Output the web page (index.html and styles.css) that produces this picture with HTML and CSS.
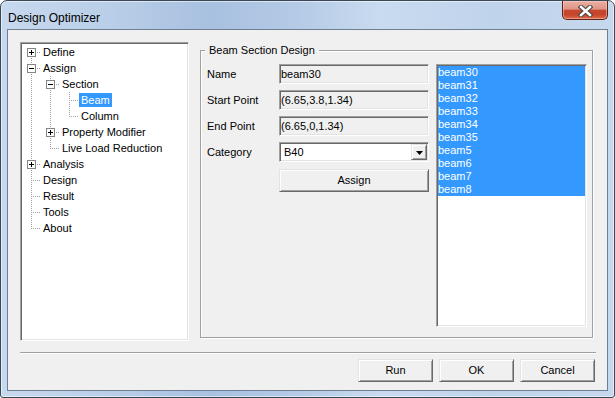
FILE: index.html
```html
<!DOCTYPE html>
<html>
<head>
<meta charset="utf-8">
<title>Design Optimizer</title>
<link rel="stylesheet" href="styles.css">
</head>
<body>
<div class="window">
  <div class="titlebar">
    <span class="title">Design Optimizer</span>
    <div class="close">
      <svg width="15" height="12" viewBox="0 0 15 12">
        <path d="M3 2 L12 10 M12 2 L3 10" stroke="#4a4a4a" stroke-width="4.6" stroke-linecap="square"/>
        <path d="M3 2 L12 10 M12 2 L3 10" stroke="#ffffff" stroke-width="2.4" stroke-linecap="square"/>
      </svg>
    </div>
  </div>
  <div class="client">
    <div class="main">
      <div class="tree">
        <div class="row"><span class="c first"><svg class="exp" width="9" height="9" viewBox="0 0 9 9"><rect x="0.5" y="0.5" width="8" height="8" fill="#fff" stroke="#848484"/><path d="M2 4.5h5M4.5 2v5" stroke="#000"/></svg></span><span class="lbl">Define</span></div>
        <div class="row"><span class="c"><svg class="exp" width="9" height="9" viewBox="0 0 9 9"><rect x="0.5" y="0.5" width="8" height="8" fill="#fff" stroke="#848484"/><path d="M2 4.5h5" stroke="#000"/></svg></span><span class="lbl">Assign</span></div>
        <div class="row"><span class="c pipe"></span><span class="c"><svg class="exp" width="9" height="9" viewBox="0 0 9 9"><rect x="0.5" y="0.5" width="8" height="8" fill="#fff" stroke="#848484"/><path d="M2 4.5h5" stroke="#000"/></svg></span><span class="lbl">Section</span></div>
        <div class="row"><span class="c pipe"></span><span class="c pipe"></span><span class="c"></span><span class="lbl sel">Beam</span></div>
        <div class="row"><span class="c pipe"></span><span class="c pipe"></span><span class="c last"></span><span class="lbl">Column</span></div>
        <div class="row"><span class="c pipe"></span><span class="c"><svg class="exp" width="9" height="9" viewBox="0 0 9 9"><rect x="0.5" y="0.5" width="8" height="8" fill="#fff" stroke="#848484"/><path d="M2 4.5h5M4.5 2v5" stroke="#000"/></svg></span><span class="lbl">Property Modifier</span></div>
        <div class="row"><span class="c pipe"></span><span class="c last"></span><span class="lbl">Live Load Reduction</span></div>
        <div class="row"><span class="c"><svg class="exp" width="9" height="9" viewBox="0 0 9 9"><rect x="0.5" y="0.5" width="8" height="8" fill="#fff" stroke="#848484"/><path d="M2 4.5h5M4.5 2v5" stroke="#000"/></svg></span><span class="lbl">Analysis</span></div>
        <div class="row"><span class="c"></span><span class="lbl">Design</span></div>
        <div class="row"><span class="c"></span><span class="lbl">Result</span></div>
        <div class="row"><span class="c"></span><span class="lbl">Tools</span></div>
        <div class="row"><span class="c last"></span><span class="lbl">About</span></div>
      </div>
      <div class="group">
        <div class="legend">Beam Section Design</div>
        <div class="group-body">
          <div class="form">
            <span class="label">Name</span><div class="field">beam30</div>
            <span class="label">Start Point</span><div class="field">(6.65,3.8,1.34)</div>
            <span class="label">End Point</span><div class="field">(6.65,0,1.34)</div>
            <span class="label">Category</span>
            <div class="combo"><span class="combo-text">B40</span><span class="drop"><svg width="7" height="4" viewBox="0 0 7 4"><path d="M0 0h7L3.5 4z" fill="#000"/></svg></span></div>
            <button class="btn assign">Assign</button>
          </div>
          <div class="list">
            <div class="item sel">beam30</div>
            <div class="item sel">beam31</div>
            <div class="item sel">beam32</div>
            <div class="item sel">beam33</div>
            <div class="item sel">beam34</div>
            <div class="item sel">beam35</div>
            <div class="item sel">beam5</div>
            <div class="item sel">beam6</div>
            <div class="item sel">beam7</div>
            <div class="item sel">beam8</div>
          </div>
        </div>
      </div>
    </div>
    <div class="sep"></div>
    <div class="buttons">
      <button class="btn">Run</button>
      <button class="btn">OK</button>
      <button class="btn">Cancel</button>
    </div>
  </div>
</div>
</body>
</html>
```

FILE: styles.css
```css
html, body {
  margin: 0;
  padding: 0;
  background: #ffffff;
}
body {
  font-family: "Liberation Sans", Arial, sans-serif;
  font-size: 11px;
  color: #000;
}
.window {
  width: 615px;
  height: 398px;
  box-sizing: border-box;
  border: 1px solid #3a4756;
  border-radius: 7px 7px 3px 3px;
  background: linear-gradient(to right, #c7d9ee 0%, #b9cee8 18%, #a8c1e0 34%, #b4cae6 48%, #c9dbef 62%, #bfd3eb 80%, #c5d8ed 100%);
  box-shadow: inset 0 0 0 1px rgba(255, 255, 255, 0.55);
  display: flex;
  flex-direction: column;
}
.titlebar {
  height: 28px;
  flex: none;
  display: flex;
  justify-content: space-between;
  align-items: flex-start;
}
.title {
  margin: 10px 0 0 7px;
  font-size: 12px;
  line-height: 14px;
  color: #000;
}
.close {
  width: 46px;
  height: 19px;
  margin-right: 6px;
  box-sizing: border-box;
  border: 1px solid #5e2218;
  border-top: none;
  border-radius: 0 0 5px 5px;
  background: linear-gradient(to bottom, #eab0a3 0%, #de9585 45%, #c8472f 52%, #c7442c 75%, #d96a47 100%);
  box-shadow: inset 0 0 0 1px rgba(255, 220, 210, 0.45);
  display: flex;
  align-items: center;
  justify-content: center;
}
.close svg {
  display: block;
  margin-top: 1px;
}
.client {
  flex: 1;
  margin: 0 6px 6px;
  border: 1px solid #6e7f93;
  background: #f0f0f0;
  padding: 12px 12px 0;
  display: flex;
  flex-direction: column;
}
.main {
  display: flex;
  gap: 11px;
  flex: none;
}

/* tree view */
.tree {
  width: 169px;
  height: 299px;
  box-sizing: border-box;
  background: #fff;
  border: 1px solid;
  border-color: #a0a0a0 #ffffff #ffffff #a0a0a0;
  box-shadow: inset 1px 1px 0 #696969, inset -1px -1px 0 #e3e3e3;
  padding: 1px;
}
.row {
  display: flex;
  align-items: center;
  height: 16px;
}
.c {
  position: relative;
  flex: none;
  width: 19px;
  height: 16px;
}
.c::before {
  content: "";
  position: absolute;
  left: 9px;
  width: 1px;
  top: 0;
  bottom: 0;
  background: repeating-linear-gradient(to bottom, #a0a0a0 0 1px, transparent 1px 2px);
}
.c::after {
  content: "";
  position: absolute;
  left: 9px;
  right: 0;
  top: 8px;
  height: 1px;
  background: repeating-linear-gradient(to right, #a0a0a0 0 1px, transparent 1px 2px);
}
.c.first::before {
  top: 8px;
}
.c.last::before {
  bottom: 7px;
}
.c.pipe::after {
  display: none;
}
.exp {
  position: absolute;
  left: 5px;
  top: 4px;
  z-index: 1;
  display: block;
}
.lbl {
  padding: 0 2px;
  line-height: 14px;
  white-space: nowrap;
}
.lbl.sel {
  background: #3399ff;
  color: #fff;
}

/* group box */
.group {
  width: 393px;
  height: 288px;
  box-sizing: border-box;
  margin-top: 8px;
  border: 1px solid #a0a0a0;
  box-shadow: inset 1px 1px 0 #fff, 1px 1px 0 #fff;
}
.legend {
  margin: -8px 0 0 4px;
  padding: 0 4px;
  width: max-content;
  background: #f0f0f0;
  line-height: 14px;
}
.group-body {
  display: flex;
  gap: 7px;
  margin-top: 7px;
  padding-left: 6px;
}
.form {
  width: 222px;
  display: grid;
  grid-template-columns: 72px 150px;
  grid-template-rows: 20px 20px 20px 20px 24px;
  row-gap: 6px;
  align-content: start;
}
.label {
  align-self: center;
  line-height: 14px;
  white-space: nowrap;
}
.field {
  box-sizing: border-box;
  height: 20px;
  border: 1px solid;
  border-color: #a0a0a0 #ffffff #ffffff #a0a0a0;
  box-shadow: inset 1px 1px 0 #696969, inset -1px -1px 0 #e3e3e3;
  padding: 0 0 0 1px;
  line-height: 18px;
  background: #f0f0f0;
  white-space: nowrap;
}
.combo {
  box-sizing: border-box;
  height: 20px;
  border: 1px solid;
  border-color: #a0a0a0 #ffffff #ffffff #a0a0a0;
  box-shadow: inset 1px 1px 0 #696969, inset -1px -1px 0 #e3e3e3;
  background: #fff;
  padding: 1px;
  display: flex;
  align-items: stretch;
}
.combo-text {
  flex: 1;
  padding-left: 3px;
  line-height: 16px;
}
.drop {
  width: 16px;
  box-sizing: border-box;
  background: #f0f0f0;
  border: 1px solid;
  border-color: #e3e3e3 #696969 #696969 #e3e3e3;
  box-shadow: inset 1px 1px 0 #fff, inset -1px -1px 0 #a0a0a0;
  display: flex;
  align-items: center;
  justify-content: center;
}
.drop svg {
  display: block;
  margin-top: 1px;
}
.btn {
  font: inherit;
  color: #000;
  width: 75px;
  height: 23px;
  box-sizing: border-box;
  margin: 0;
  padding: 0;
  background: #f0f0f0;
  border: 1px solid;
  border-color: #e3e3e3 #696969 #696969 #e3e3e3;
  box-shadow: inset 1px 1px 0 #fff, inset -1px -1px 0 #a0a0a0;
  border-radius: 0;
  text-align: center;
  line-height: 19px;
}
.btn.assign {
  grid-column: 2;
  width: 150px;
  margin-top: 1px;
}
.list {
  width: 151px;
  height: 263px;
  box-sizing: border-box;
  background: #fff;
  border: 1px solid;
  border-color: #a0a0a0 #ffffff #ffffff #a0a0a0;
  box-shadow: inset 1px 1px 0 #696969, inset -1px -1px 0 #e3e3e3;
  padding: 1px;
}
.item {
  height: 13px;
  line-height: 13px;
  padding-left: 0;
  white-space: nowrap;
}
.item.sel {
  background: #3399ff;
  color: #fff;
}

/* footer */
.sep {
  margin: 11px -1px 0 0;
  height: 0;
  border-top: 1px solid #a0a0a0;
  border-bottom: 1px solid #fff;
}
.buttons {
  display: flex;
  justify-content: flex-end;
  gap: 6px;
  margin-top: 5px;
}
```
